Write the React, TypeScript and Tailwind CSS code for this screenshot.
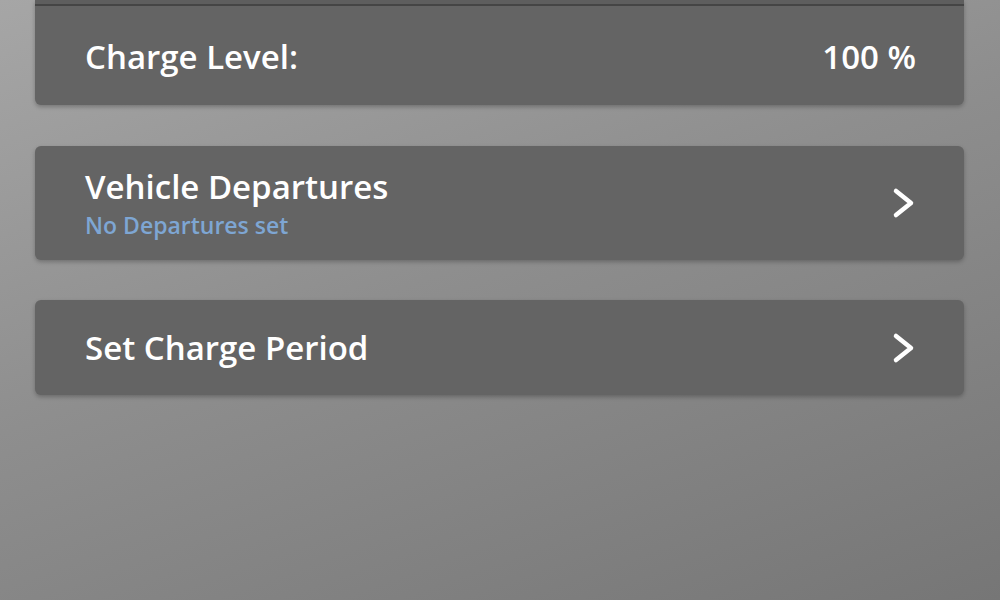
function Chevron() {
  return (
    <svg width="24" height="32" viewBox="0 0 24 32" fill="none" className="shrink-0">
      <polyline
        points="4,4 19,16 4,28"
        stroke="white"
        strokeWidth="4.5"
        strokeLinecap="round"
        strokeLinejoin="round"
      />
    </svg>
  );
}

function NavCard({ title, subtitle, height }: { title: string; subtitle?: string; height: string }) {
  return (
    <div
      className={`flex items-center justify-between rounded-[6px] bg-[#646464] pl-[50px] pr-[48px] shadow-[0_2px_4px_rgba(0,0,0,0.25)] ${height}`}
    >
      <div className="flex flex-col">
        <span className="text-[33px] font-semibold leading-[40px] text-white">{title}</span>
        {subtitle && (
          <span className="mt-[4px] text-[23px] font-semibold leading-[28px] text-[#7ea6d3]">{subtitle}</span>
        )}
      </div>
      <Chevron />
    </div>
  );
}

export default function App() {
  return (
    <div
      className="flex h-[600px] w-[1000px] flex-col bg-[linear-gradient(160deg,#a6a6a6_0%,#8e8e8e_45%,#767676_100%)] px-[35px] pr-[36px]"
      style={{ fontFamily: '"Open Sans", "Noto Sans", sans-serif' }}
    >
      <div className="flex h-[105px] flex-col rounded-b-[6px] bg-[#646464] shadow-[0_2px_4px_rgba(0,0,0,0.25)]">
        <div className="h-[4px] bg-[#5e5e5e]" />
        <div className="h-[2px] bg-[#454545]" />
        <div className="flex flex-1 items-center justify-between pl-[50px] pr-[48px] pt-[2px]">
          <span className="text-[33px] font-semibold text-white">Charge Level:</span>
          <span className="text-[33px] font-semibold text-white">100 %</span>
        </div>
      </div>
      <div className="mt-[41px]">
        <NavCard title="Vehicle Departures" subtitle="No Departures set" height="h-[114px]" />
      </div>
      <div className="mt-[40px]">
        <NavCard title="Set Charge Period" height="h-[95px]" />
      </div>
    </div>
  );
}
